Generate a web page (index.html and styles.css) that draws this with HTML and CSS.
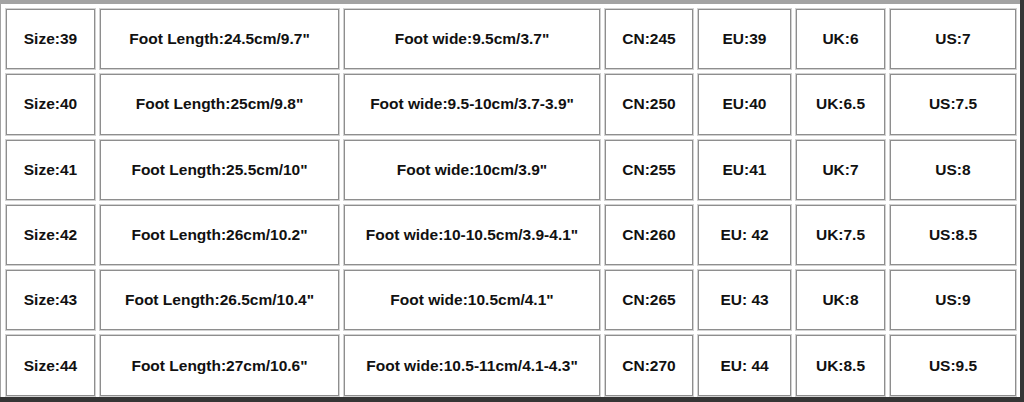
FILE: index.html
```html
<!DOCTYPE html>
<html>
<head>
<meta charset="utf-8">
<link rel="stylesheet" href="styles.css">
</head>
<body>
<div class="frame">
<table class="sizes">
<colgroup>
<col class="c1"><col class="c2"><col class="c3"><col class="c4"><col class="c5"><col class="c6"><col class="c7">
</colgroup>
<tbody>
<tr><td>Size:39</td><td>Foot Length:24.5cm/9.7"</td><td>Foot wide:9.5cm/3.7"</td><td>CN:245</td><td>EU:39</td><td>UK:6</td><td>US:7</td></tr>
<tr><td>Size:40</td><td>Foot Length:25cm/9.8"</td><td>Foot wide:9.5-10cm/3.7-3.9"</td><td>CN:250</td><td>EU:40</td><td>UK:6.5</td><td>US:7.5</td></tr>
<tr><td>Size:41</td><td>Foot Length:25.5cm/10"</td><td>Foot wide:10cm/3.9"</td><td>CN:255</td><td>EU:41</td><td>UK:7</td><td>US:8</td></tr>
<tr><td>Size:42</td><td>Foot Length:26cm/10.2"</td><td>Foot wide:10-10.5cm/3.9-4.1"</td><td>CN:260</td><td>EU: 42</td><td>UK:7.5</td><td>US:8.5</td></tr>
<tr><td>Size:43</td><td>Foot Length:26.5cm/10.4"</td><td>Foot wide:10.5cm/4.1"</td><td>CN:265</td><td>EU: 43</td><td>UK:8</td><td>US:9</td></tr>
<tr><td>Size:44</td><td>Foot Length:27cm/10.6"</td><td>Foot wide:10.5-11cm/4.1-4.3"</td><td>CN:270</td><td>EU: 44</td><td>UK:8.5</td><td>US:9.5</td></tr>
</tbody>
</table>
</div>
</body>
</html>
```
FILE: styles.css
```css
html, body {
  margin: 0;
  padding: 0;
}
body {
  background: #353535;
  width: 1024px;
  height: 402px;
  overflow: hidden;
}
.frame {
  width: 1020px;
  height: 397px;
  overflow: hidden;
  background: #ffffff;
}
.sizes {
  table-layout: fixed;
  border-collapse: separate;
  border-spacing: 5px 5px;
  border-top: 4px solid #a3a3a3;
  border-left: 1px solid #a3a3a3;
  border-right: 2px solid #a3a3a3;
  width: 1023px;
  font-family: "Liberation Sans", Arial, sans-serif;
  font-weight: bold;
  font-size: 15.5px;
  color: #111111;
}
.c1 { width: 89px; }
.c2 { width: 239px; }
.c3 { width: 256px; }
.c4 { width: 88px; }
.c5 { width: 93px; }
.c6 { width: 89px; }
.c7 { width: 126px; }
.sizes td {
  box-sizing: border-box;
  height: 60.3px;
  padding: 0;
  text-align: center;
  vertical-align: middle;
  border: 1px solid #8e8e8e;
  box-shadow: 0 0 0 1px #d2d2d2;
  white-space: nowrap;
}
```
